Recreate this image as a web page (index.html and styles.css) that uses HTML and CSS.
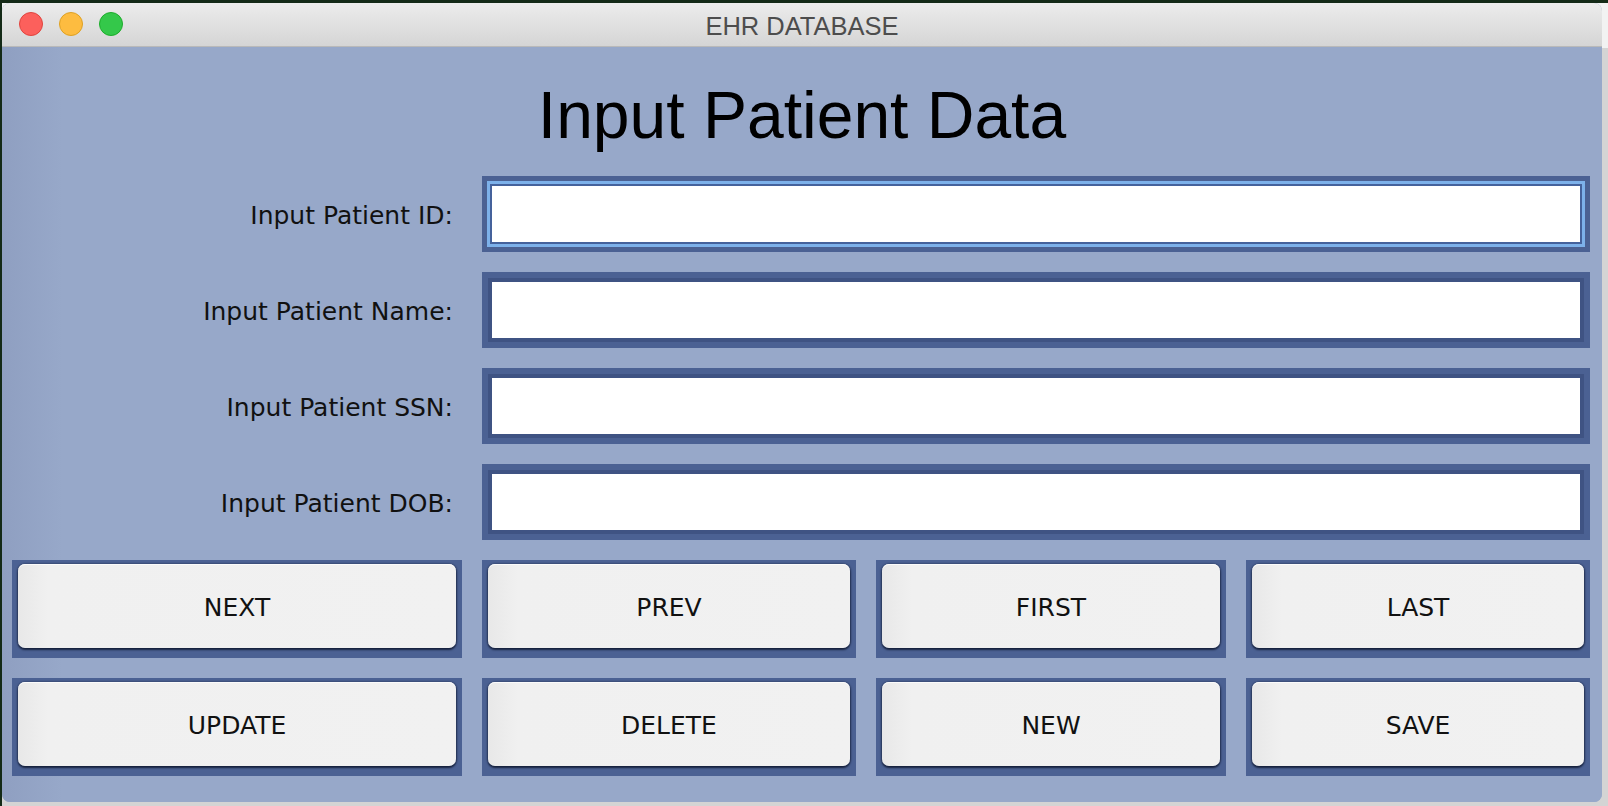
FILE: index.html
```html
<!DOCTYPE html>
<html lang="en">
<head>
<meta charset="utf-8">
<title>EHR DATABASE</title>
<link rel="stylesheet" href="styles.css">
</head>
<body>
  <div class="window">
    <div class="titlebar">
      <div class="lights">
        <span class="light red"></span>
        <span class="light yellow"></span>
        <span class="light green"></span>
      </div>
      <div class="title">EHR DATABASE</div>
    </div>
    <div class="content">
      <h1 class="heading">Input Patient Data</h1>
      <div class="form">
        <label class="label" for="pid">Input Patient ID:</label>
        <input class="field focused" id="pid" type="text">
        <label class="label" for="pname">Input Patient Name:</label>
        <input class="field" id="pname" type="text">
        <label class="label" for="pssn">Input Patient SSN:</label>
        <input class="field" id="pssn" type="text">
        <label class="label" for="pdob">Input Patient DOB:</label>
        <input class="field" id="pdob" type="text">
      </div>
      <div class="buttons">
        <div class="cell"><button class="btn">NEXT</button></div>
        <div class="cell"><button class="btn">PREV</button></div>
        <div class="cell"><button class="btn">FIRST</button></div>
        <div class="cell"><button class="btn">LAST</button></div>
        <div class="cell"><button class="btn">UPDATE</button></div>
        <div class="cell"><button class="btn">DELETE</button></div>
        <div class="cell"><button class="btn">NEW</button></div>
        <div class="cell"><button class="btn">SAVE</button></div>
      </div>
    </div>
  </div>
</body>
</html>
```
FILE: styles.css
```css
html, body {
  margin: 0;
  padding: 0;
}

body {
  width: 1608px;
  height: 806px;
  overflow: hidden;
  box-sizing: border-box;
  padding: 3px 0 0 2px;
  background:
    linear-gradient(#142a17, #142a17) top left / 100% 3px no-repeat,
    linear-gradient(#142a17, #142a17) top left / 2px 100% no-repeat,
    linear-gradient(#f2f2f2, #f2f2f2) top left / 100% 48px no-repeat,
    #d4d4d4;
}

.window {
  width: 1600px;
  height: 799px;
  border-radius: 8px;
  overflow: hidden;
  display: flex;
  flex-direction: column;
  background: #97a8c9;
}

.titlebar {
  height: 43px;
  border-bottom: 1px solid #b9b9b9;
  background: linear-gradient(#ececec, #d5d5d5);
  display: flex;
  align-items: center;
  position: relative;
  flex: none;
}

.lights {
  display: flex;
  gap: 16px;
  padding-left: 17px;
  padding-bottom: 1px;
}

.light {
  width: 22px;
  height: 22px;
  border-radius: 50%;
  border: 1px solid;
  display: block;
}

.red { background: #fc605c; border-color: #e0443e; }
.yellow { background: #fdbc40; border-color: #dea123; }
.green { background: #34c84a; border-color: #1dad2b; }

.title {
  position: absolute;
  left: 0;
  right: 0;
  top: 0;
  height: 43px;
  line-height: 47px;
  text-align: center;
  font-family: "Liberation Sans", Arial, sans-serif;
  font-size: 25.5px;
  color: #4d4d4d;
}

.content {
  flex: 1;
  padding: 28px 12px 0 10px;
  background: linear-gradient(to right, #8f9fc1 0, #97a8c9 60px);
  display: flex;
  flex-direction: column;
}

.heading {
  margin: 0 0 21px 0;
  height: 80px;
  line-height: 80px;
  text-align: center;
  font-family: "Liberation Sans", Arial, sans-serif;
  font-weight: normal;
  font-size: 66px;
  color: #000;
  padding-left: 2px;
}

.form {
  display: grid;
  grid-template-columns: 450px 1fr;
  grid-auto-rows: 76px;
  column-gap: 20px;
  row-gap: 20px;
}

.label {
  display: flex;
  align-items: center;
  justify-content: flex-end;
  padding-right: 9px;
  padding-top: 2px;
  font-family: "DejaVu Sans", Verdana, sans-serif;
  font-size: 25px;
  color: #111;
}

.field {
  display: block;
  width: 100%;
  height: 76px;
  box-sizing: border-box;
  margin: 0;
  padding: 0 8px;
  border: 6px solid #4b6193;
  box-shadow: inset 0 0 0 4px #3f5383;
  background: #fff;
  outline: none;
  font-family: "DejaVu Sans", sans-serif;
  font-size: 25px;
}

.field.focused {
  border-width: 5px;
  box-shadow: inset 0 0 0 3px #7db1ea, inset 0 0 0 5px #45629c;
}

.buttons {
  margin-top: 20px;
  display: grid;
  grid-template-columns: 450px 374px 350px 1fr;
  grid-auto-rows: 98px;
  column-gap: 20px;
  row-gap: 20px;
}

.cell {
  background: #4b6193;
  padding: 4px 6px 10px 6px;
  display: flex;
}

.btn {
  flex: 1;
  margin: 0;
  border: none;
  border-radius: 7px;
  background:
    linear-gradient(to right, #e8e8e8 0, #f0f0f0 30px, #f1f1f1 100%);
  box-shadow:
    inset 0 1px 0 #fbfbfb,
    0 2px 2px rgba(10, 18, 40, 0.75),
    1px 0 2px rgba(10, 18, 40, 0.45),
    -1px 0 2px rgba(10, 18, 40, 0.35);
  font-family: "DejaVu Sans", Verdana, sans-serif;
  font-size: 25px;
  color: #111;
  padding: 3px 0 0 0;
  cursor: default;
}
```
